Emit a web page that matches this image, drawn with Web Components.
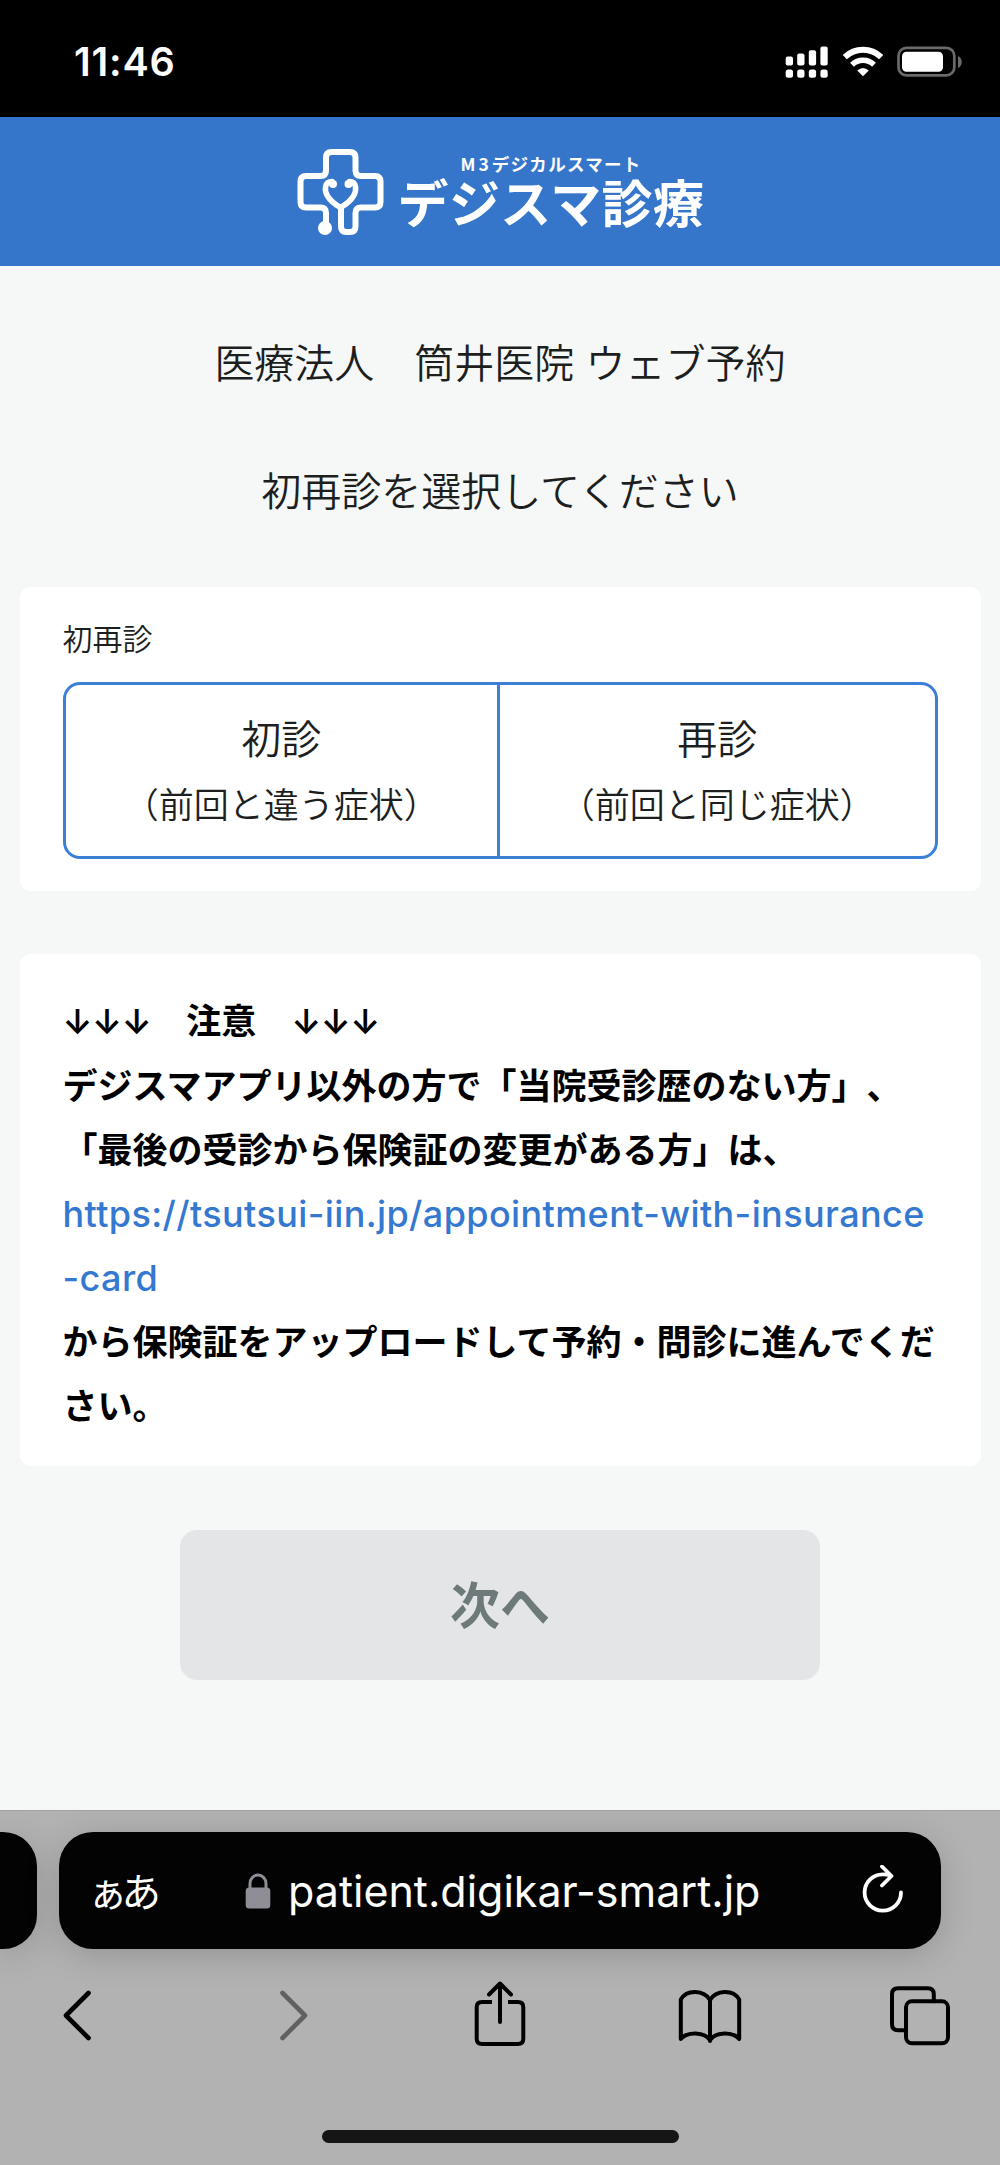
<!DOCTYPE html>
<html lang="ja">
<head>
<meta charset="utf-8">
<title>デジスマ診療</title>
<style>
    body {
        margin: 0;
        width: 1000px;
        background: #f6f8f8;
        color: #1d1f1f;
        font-family: Inter, "Noto Sans CJK JP", sans-serif;
        text-spacing-trim: space-all;
    }
    main {
        height: 1544px;
        display: flex;
        flex-direction: column;
        align-items: center;
    }
    .arrows {
        font-size: 34px;
        font-weight: 600;
        letter-spacing: -0.4px;
    }
</style>
</head>
<body>
<status-bar>11:46</status-bar>
<brand-header></brand-header>
<main>
    <page-title style="margin-top: 68px">医療法人　筒井医院 ウェブ予約</page-title>
    <page-title style="margin-top: 68px">初再診を選択してください</page-title>
    <white-card style="height: 304px; margin-top: 65px; padding-top: 30px">
        <choice-group label="初再診">
            <choice-item note="（前回と違う症状）">初診</choice-item>
            <choice-item note="（前回と同じ症状）">再診</choice-item>
        </choice-group>
    </white-card>
    <white-card style="height: 512px; margin-top: 63px; padding-top: 35px">
        <notice-text>
            <div><span class="arrows">↓↓↓</span>　注意　<span class="arrows">↓↓↓</span></div>
            <div>デジスマアプリ以外の方で「当院受診歴のない方」、</div>
            <div>「最後の受診から保険証の変更がある方」は、</div>
            <a>https://tsutsui-iin.jp/appointment-with-insurance<br>-card</a>
            <div>から保険証をアップロードして予約・問診に進んでくだ<br>さい。</div>
        </notice-text>
    </white-card>
    <next-button>次へ</next-button>
</main>
<browser-bar>patient.digikar-smart.jp</browser-bar>

<script>
function define(name, html) {
    const template = document.createElement("template");
    template.innerHTML = html;
    customElements.define(name, class extends HTMLElement {
        constructor() {
            super();
            this.attachShadow({ mode: "open" }).appendChild(template.content.cloneNode(true));
        }

        connectedCallback() {
            // copy plain attributes into the parts that show them
            this.shadowRoot.querySelectorAll("[data-attr]").forEach(el => {
                el.textContent = this.getAttribute(el.dataset.attr);
            });
        }
    });
}

define("status-bar", `
<style>
    :host {
        display: flex;
        justify-content: space-between;
        align-items: center;
        box-sizing: border-box;
        height: 117px;
        padding: 6px 37px 0 74px;
        background: #000;
        color: #fff;
        font-size: 39.5px;
        font-weight: 600;
    }
    .time { letter-spacing: 0.8px; }
</style>
<div class="time"><slot></slot></div>
<svg width="178" height="34" viewBox="785 44.5 178 34" fill="#fff">
    <rect x="785.7" y="56" width="7.3" height="9" rx="2"/>
    <rect x="797.2" y="53" width="7.3" height="12" rx="2"/>
    <rect x="808.8" y="49.7" width="7.3" height="15.3" rx="2"/>
    <rect x="820.4" y="46" width="7.3" height="19" rx="2"/>
    <rect x="785.7" y="69" width="7.3" height="8.3" rx="2.5"/>
    <rect x="797.2" y="69" width="7.3" height="8.3" rx="2.5"/>
    <rect x="808.8" y="69" width="7.3" height="8.3" rx="2.5"/>
    <rect x="820.4" y="69" width="7.3" height="8.3" rx="2.5"/>
    <g fill="none" stroke="#fff">
        <path d="M844.8 56.6a26.2 26.2 0 0 1 36.4 0" stroke-width="6"/>
        <path d="M852 64.2a16 16 0 0 1 22 0" stroke-width="5.6"/>
    </g>
    <path d="M863 75.8l-5.8-5.9q5.8-5 11.6 0z"/>
    <rect x="898.5" y="47.3" width="55.8" height="27.6" rx="8" fill="none" stroke="#6a6a6a" stroke-width="2.7"/>
    <rect x="902" y="51.2" width="41" height="20" rx="4.5"/>
    <path d="M958 55.5c5 2 5 10 0 12z" fill="#6a6a6a"/>
</svg>
`);

define("brand-header", `
<style>
    :host {
        display: flex;
        justify-content: center;
        align-items: center;
        height: 149px;
        background: #3576cb;
        color: #fff;
        font-family: "Noto Sans CJK JP", sans-serif;
    }
    .names { width: 306px; margin: 0 1px 2px 14px; }
    .sub {
        margin-left: 63px;
        font-size: 17.5px;
        line-height: 20px;
        font-weight: 700;
        letter-spacing: 1.3px;
        white-space: nowrap;
    }
    .sub span { letter-spacing: 3px; }
    .name {
        font-size: 51px;
        line-height: 54px;
        font-weight: 700;
        letter-spacing: 0.4px;
        white-space: nowrap;
    }
</style>
<svg width="88" height="88" viewBox="296 148 88 88" fill="none" stroke="#fff" stroke-width="6" stroke-linecap="round" stroke-linejoin="round">
    <path d="M326 225v-12q0-5.5-5.5-5.5H306q-5.5 0-5.5-5.5v-20.500q0-5.500 5.500-5.500h14.500q5.500 0 5.500-5.500V157.500q0-5.500 5.500-5.500h18.500q5.500 0 5.500 5.500V170.500q0 5.500 5.500 5.500h14q5.500 0 5.500 5.500V202q0 5.500-5.500 5.500h-14q-5.500 0-5.500 5.500v13.500q0 5.500-5.500 5.500h-3.500q-5.500 0-5.500-5.500V208"/>
    <path d="M332 181.500C324.500 181.500 324 190 327.500 196C330.500 201 336 205 340.500 207.500C345 205 350.500 201 353.500 196C357 190 356.500 181.500 349.500 181.500" stroke-width="5.500"/>
    <circle cx="333" cy="184" r="4" fill="#fff" stroke="none"/>
    <circle cx="348.500" cy="184" r="4" fill="#fff" stroke="none"/>
    <circle cx="325" cy="228" r="7" fill="#fff" stroke="none"/>
</svg>
<div class="names">
    <div class="sub"><span>M3</span>デジカルスマート</div>
    <div class="name">デジスマ診療</div>
</div>
`);

define("page-title", `
<style>
    :host {
        display: block;
        font-size: 40px;
        line-height: 60px;
        white-space: nowrap;
        font-weight: 350;
    }
</style>
<slot></slot>
`);

define("white-card", `
<style>
    :host {
        display: block;
        box-sizing: border-box;
        flex: none;
        width: 961px;
        padding: 0 43px;
        border-radius: 11px;
        background: #fff;
    }
</style>
<slot></slot>
`);

define("choice-group", `
<style>
    :host { display: block; font-weight: 350; }
    .label { font-size: 30px; line-height: 44px; }
    .items {
        display: grid;
        grid-template-columns: 50% 1fr;
        box-sizing: border-box;
        height: 177px;
        margin-top: 21px;
        border: 3px solid #3b80d6;
        border-radius: 17px;
    }
    ::slotted(:first-child) { border-right: 3px solid #3b80d6; }
</style>
<div class="label" data-attr="label"></div>
<div class="items"><slot></slot></div>
`);

define("choice-item", `
<style>
    :host {
        display: flex;
        flex-direction: column;
        align-items: center;
        justify-content: center;
        padding-top: 4px;
    }
    .name { font-size: 40px; line-height: 64px; }
    .note { font-size: 35px; line-height: 66px; white-space: nowrap; }
</style>
<div class="name"><slot></slot></div>
<div class="note" data-attr="note"></div>
`);

define("notice-text", `
<style>
    :host {
        display: block;
        color: #000;
        font-size: 35px;
        line-height: 64px;
        font-weight: 600;
        white-space: nowrap;
    }
    ::slotted(a) {
        display: block;
        color: #3578cf;
        font-size: 36px;
        font-weight: 500;
        letter-spacing: 0.39px;
    }
</style>
<slot></slot>
`);

define("next-button", `
<style>
    :host {
        display: flex;
        align-items: center;
        justify-content: center;
        box-sizing: border-box;
        flex: none;
        width: 640px;
        height: 150px;
        margin-top: 64px;
        padding-bottom: 7px;
        border-radius: 17px;
        background: #e4e5e7;
        color: #6d7a79;
        font-size: 50px;
        font-weight: 600;
    }
</style>
<slot></slot>
`);

define("browser-bar", `
<style>
    :host {
        display: block;
        box-sizing: border-box;
        height: 355px;
        padding-top: 21px;
        border-top: 1px solid #a0a3a2;
        background: #b2b2b2;
        overflow: hidden;
    }
    .tabs { display: flex; gap: 22px; }
    .prev, .address {
        height: 117px;
        background: #030303;
        box-shadow: 0 6px 34px rgba(0, 0, 0, 0.17);
    }
    .prev { width: 37px; border-radius: 0 34px 34px 0; }
    .address {
        display: flex;
        align-items: center;
        box-sizing: border-box;
        width: 882px;
        padding: 0 36px 0 29px;
        border-radius: 34px;
        color: #fff;
    }
    .aa {
        width: 157px;
        padding-bottom: 3px;
        font-size: 39.5px;
        letter-spacing: -6px;
        white-space: nowrap;
    }
    .url { flex: 1; margin-left: 17px; font-size: 43px; white-space: nowrap; }
    .tools {
        display: grid;
        grid-template-columns: 216.5px 206.5px 209.7px 210.3px 64px;
        margin: 31px 0 0 45px;
        height: 70px;
    }
    .tools svg {
        width: 64px;
        height: 70px;
        fill: none;
        stroke: #000;
        stroke-width: 4;
        stroke-linecap: round;
        stroke-linejoin: round;
    }
    .home {
        width: 357px;
        height: 13px;
        margin: 80px auto 0;
        border-radius: 7px;
        background: #151515;
    }
</style>
<div class="tabs">
    <div class="prev"></div>
    <div class="address">
        <div class="aa">ぁあ</div>
        <svg width="26" height="36" viewBox="0 0 26 36">
            <rect x="0.7" y="14.500" width="24.600" height="21" rx="3.500" fill="#8f8e97"/>
            <path d="M5 16V10.500a8 8.500 0 0 1 16 0V16" fill="none" stroke="#8f8e97" stroke-width="3"/>
        </svg>
        <div class="url"><slot></slot></div>
        <svg width="44" height="52" viewBox="861 1865.5 44 52" fill="none" stroke="#fff" stroke-width="3.800" stroke-linecap="round" stroke-linejoin="round">
            <path d="M901 1893a18.200 18.200 0 1 1-18.300-18.200q4 0 8 1.200M882 1867l9.500 9.500-9.500 9.500"/>
        </svg>
    </div>
</div>
<div class="tools">
    <svg viewBox="0 0 64 70" style="stroke-width: 4.600"><path d="M43.500 13L21 35.500l22.500 22.500"/></svg>
    <svg viewBox="0 0 64 70" style="stroke-width: 4.600; stroke: #616161"><path d="M20.500 13L43 35.500 20.500 58"/></svg>
    <svg viewBox="0 0 64 70">
        <path d="M24 22H14q-5.300 0-5.300 5.300v31.400q0 5.300 5.300 5.300h36q5.300 0 5.300-5.300V27.300q0-5.300-5.300-5.300h-10" stroke-linecap="butt"/>
        <path d="M32 42V3.500M21 14.500l11-11 11 11"/>
    </svg>
    <svg viewBox="0 0 64 70">
        <path d="M32 61V20C26 10 9 9 2.800 19.500V59C9 51.500 26 51.500 32 60 38 51.500 55 51.500 61.200 59V19.500C55 9 38 10 32 20"/>
    </svg>
    <svg viewBox="0 0 64 70">
        <path d="M18 50.200H10q-6 0-6-6V14.300q0-6 6-6h29.800q6 0 6 6v7"/>
        <rect x="18" y="21.300" width="42" height="42" rx="6"/>
    </svg>
</div>
<div class="home"></div>
`);
</script>
</body>
</html>
